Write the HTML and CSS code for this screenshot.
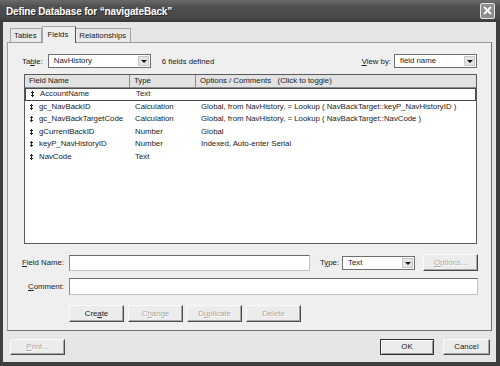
FILE: index.html
```html
<!DOCTYPE html>
<html lang="en">
<head>
    <meta charset="UTF-8">
    <title>Define Database for “navigateBack”</title>
    <link rel="stylesheet" href="styles.css">
</head>
<body>
    <div class="window">
        <div class="titlebar">
            <span class="title">Define Database for “navigateBack”</span>
            <span class="close">
                <svg width="9" height="9" viewBox="0 0 9 9"><path d="M1 1 L8 8 M8 1 L1 8" stroke="#fff" stroke-width="1.8"/></svg>
            </span>
        </div>
        <div class="client">
            <div class="tabs">
                <span class="tab">Tables</span>
                <span class="tab active">Fields</span>
                <span class="tab">Relationships</span>
            </div>
            <div class="panel">
                <div class="toolbar">
                    <span class="label">Ta<u>b</u>le:</span>
                    <span class="select table-select">NavHistory<span class="arrow"></span></span>
                    <span class="count">6 fields defined</span>
                    <span class="label view-label"><u>V</u>iew by:</span>
                    <span class="select view-select">field name<span class="arrow"></span></span>
                </div>

                <div class="list">
                    <div class="list-head">
                        <span>Field Name</span>
                        <span>Type</span>
                        <span>Options / Comments &nbsp; (Click to toggle)</span>
                    </div>
                    <div class="list-row current">
                        <span class="name"><i class="grip"></i>AccountName</span>
                        <span>Text</span>
                        <span></span>
                    </div>
                    <div class="list-row">
                        <span class="name"><i class="grip"></i>gc_NavBackID</span>
                        <span>Calculation</span>
                        <span>Global, from NavHistory, = Lookup ( NavBackTarget::keyP_NavHistoryID )</span>
                    </div>
                    <div class="list-row">
                        <span class="name"><i class="grip"></i>gc_NavBackTargetCode</span>
                        <span>Calculation</span>
                        <span>Global, from NavHistory, = Lookup ( NavBackTarget::NavCode )</span>
                    </div>
                    <div class="list-row">
                        <span class="name"><i class="grip"></i>gCurrentBackID</span>
                        <span>Number</span>
                        <span>Global</span>
                    </div>
                    <div class="list-row">
                        <span class="name"><i class="grip"></i>keyP_NavHistoryID</span>
                        <span>Number</span>
                        <span>Indexed, Auto-enter Serial</span>
                    </div>
                    <div class="list-row">
                        <span class="name"><i class="grip"></i>NavCode</span>
                        <span>Text</span>
                        <span></span>
                    </div>
                </div>

                <div class="form-row">
                    <span class="field-label"><u>F</u>ield Name:</span>
                    <span class="input name-input"></span>
                    <span class="label type-label">T<u>y</u>pe:</span>
                    <span class="select type-select">Text<span class="arrow"></span></span>
                    <span class="btn disabled options-btn"><u>O</u>ptions...</span>
                </div>
                <div class="form-row comment-row">
                    <span class="field-label"><u>C</u>omment:</span>
                    <span class="input comment-input"></span>
                </div>
                <div class="actions">
                    <span class="btn">Cre<u>a</u>te</span>
                    <span class="btn disabled">C<u>h</u>ange</span>
                    <span class="btn disabled">D<u>u</u>plicate</span>
                    <span class="btn disabled">Delete</span>
                </div>
            </div>
            <div class="footer">
                <span class="btn disabled"><u>P</u>rint...</span>
                <span class="btn default">OK</span>
                <span class="btn cancel">Cancel</span>
            </div>
        </div>
    </div>
</body>
</html>
```
FILE: styles.css
```css
body {
    margin: 0;
    background: #3b3b3b;
    font-family: "Liberation Sans", Arial, sans-serif;
    font-size: 7.8px;
    color: #1a1a1a;
}

.window {
    width: 500px;
    height: 366px;
    display: flex;
    flex-direction: column;
    background: #3e3e3e;
}

.titlebar {
    height: 22px;
    display: flex;
    align-items: center;
    justify-content: space-between;
    padding: 0 5px 0 6px;
    background: linear-gradient(#6a6a6a, #505050 30%, #474747 80%, #3a3a3a);
}

.title {
    color: #fff;
    font-weight: bold;
    font-size: 10px;
    letter-spacing: -0.15px;
    text-shadow: 1px 1px 0 #2a2a2a;
}

.close {
    width: 13px;
    height: 14px;
    display: flex;
    align-items: center;
    justify-content: center;
    border: 1px solid #e8e8e8;
    border-radius: 2px;
    background: #8c8c8c;
    margin-top: -1px;
}

.client {
    flex: 1;
    margin: 0 4px 4px 3px;
    background: #e6e6e6;
    display: flex;
    flex-direction: column;
}

.tabs {
    height: 20px;
    display: flex;
    align-items: flex-end;
    padding-left: 7px;
}

.tab {
    height: 13px;
    line-height: 13px;
    padding: 0 4px 0 3px;
    border: 1px solid #a4a4a4;
    border-bottom: none;
    background: #e9e9e9;
}

.tab + .tab {
    border-left: none;
}

.tab.active {
    height: 16px;
    line-height: 16px;
    padding: 0 7px 0 5px;
    margin-bottom: -1px;
    background: #efefef;
    border-left: 1px solid #a4a4a4;
    border-right: 1px solid #555;
    position: relative;
}

.tab.active + .tab {
    border-left: none;
}

.panel {
    height: 289px;
    box-sizing: border-box;
    margin-left: 4px;
    width: 485px;
    border: 1px solid #9a9a9a;
    border-right-color: #707070;
    border-bottom-color: #707070;
    background: #efefef;
}

.toolbar {
    display: flex;
    align-items: center;
    height: 14px;
    margin: 11px 14px 0 14px;
    white-space: nowrap;
}

.label u, .field-label u, .btn u {
    text-decoration: underline;
}

.select {
    position: relative;
    flex-shrink: 0;
    box-sizing: border-box;
    height: 14px;
    line-height: 12px;
    padding-left: 5px;
    border: 1px solid #6f6f6f;
    background: #fff;
}

.select .arrow {
    position: absolute;
    right: 1px;
    top: 1px;
    width: 11px;
    height: 10px;
    box-sizing: border-box;
    border: 1px solid #c8c8c8;
    background: #e4e4e4;
}

.select .arrow::after {
    content: "";
    position: absolute;
    left: 2px;
    top: 3px;
    border-left: 3px solid transparent;
    border-right: 3px solid transparent;
    border-top: 3px solid #111;
}

.table-select {
    width: 103px;
    margin-left: 5px;
}

.count {
    margin-left: 11px;
}

.view-label {
    margin-left: auto;
}

.view-select {
    width: 83px;
    margin-left: 3px;
}

.list {
    margin: 6px 14px 0 16px;
    height: 170px;
    box-sizing: border-box;
    border: 1px solid #5a5a5a;
    background: #fff;
}

.list-head, .list-row {
    display: grid;
    grid-template-columns: 105px 66px 1fr;
}

.list-head {
    height: 12px;
    line-height: 12px;
    background: #e2e2e2;
    border-bottom: 1px solid #8a8a8a;
}

.list-head span {
    padding-left: 4px;
    border-right: 1px solid #8a8a8a;
}

.list-head span:last-child {
    border-right: none;
}

.list-row {
    height: 12.5px;
    line-height: 12.5px;
    white-space: nowrap;
}

.list-row span + span {
    padding-left: 5px;
}

.list-row.current {
    box-sizing: border-box;
    border: 1px solid #4a4a4a;
    line-height: 10.5px;
}

.name {
    display: flex;
    align-items: center;
    padding-left: 4px;
}

.grip {
    width: 4px;
    height: 6px;
    margin-right: 6px;
    background:
        linear-gradient(#222, #222) center / 1px 100% no-repeat,
        linear-gradient(#222, #222) center 1px / 3px 1px no-repeat,
        linear-gradient(#222, #222) center 4px / 3px 1px no-repeat;
}

.form-row {
    display: flex;
    align-items: center;
    height: 17px;
    margin: 10px 14px 0 14px;
    white-space: nowrap;
}

.comment-row {
    margin-top: 7px;
}

.field-label {
    flex-shrink: 0;
    width: 42px;
    text-align: right;
    padding-right: 5px;
}

.input {
    flex-shrink: 0;
    box-sizing: border-box;
    height: 16px;
    border: 1px solid #c4c4c4;
    border-top-color: #6a6a6a;
    border-left-color: #8a8a8a;
    background: #fff;
}

.name-input {
    width: 241px;
}

.comment-input {
    width: 409px;
    height: 17px;
}

.type-label {
    margin-left: 10px;
}

.type-select {
    width: 73px;
    margin-left: 3px;
}

.btn {
    flex-shrink: 0;
    box-sizing: border-box;
    width: 55px;
    height: 17px;
    line-height: 15px;
    text-align: center;
    border: 1px solid;
    border-color: #fafafa #4a4a4a #4a4a4a #fafafa;
    background: #ececec;
    box-shadow: inset -1px -1px 0 #a8a8a8;
}

.btn.disabled {
    color: #a8a8a8;
    text-shadow: 1px 1px 0 #fff;
}

.options-btn {
    margin-left: 8px;
}

.actions {
    display: flex;
    gap: 4px;
    margin: 10px 0 0 61px;
}

.footer {
    display: flex;
    align-items: flex-start;
    padding: 8px 6px 0 7px;
}

.footer .btn {
    height: 16px;
    line-height: 14px;
}

.btn.default {
    margin-left: auto;
    width: 54px;
    border-color: #333;
    box-shadow: inset 1px 1px 0 #fff, inset -1px -1px 0 #999;
}

.btn.cancel {
    width: 47px;
    margin-left: 9px;
}
```
